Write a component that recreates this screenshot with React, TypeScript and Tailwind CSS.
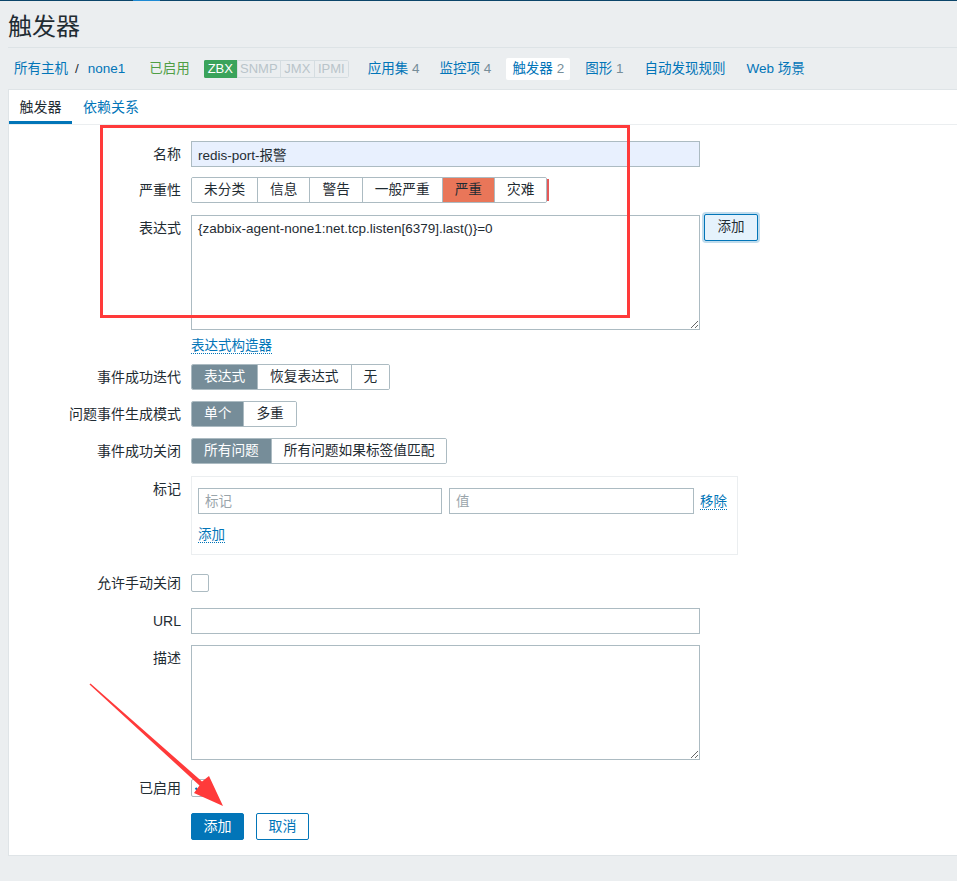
import React from "react";

const txt = "text-[13.5px] text-[#1f2c33]";

function Label({ children }: { children: React.ReactNode }) {
  return (
    <div className="w-[172px] mr-[10px] shrink-0 text-right h-[26px] leading-[26px] text-[14px] text-[#1f2c33]">
      {children}
    </div>
  );
}

function Segmented({
  items,
  active,
  activeClass,
}: {
  items: string[];
  active: number;
  activeClass: string;
}) {
  return (
    <div className="flex h-[26px] border border-[#acbbc2] rounded-[2px] overflow-hidden">
      {items.map((it, i) => (
        <div
          key={it}
          className={`px-[12px] leading-[24px] text-[13.7px] ${i > 0 ? "border-l border-[#acbbc2]" : ""} ${
            i === active ? activeClass : "bg-white text-[#1f2c33]"
          }`}
        >
          {it}
        </div>
      ))}
    </div>
  );
}

function Checkbox({ checked }: { checked?: boolean }) {
  return (
    <div className="w-[18px] h-[18px] border border-[#acbbc2] rounded-[2px] bg-white flex items-center justify-center">
      {checked && (
        <svg width="12" height="10" viewBox="0 0 12 10">
          <path d="M1.5 5 L4.5 8 L10.5 1.5" fill="none" stroke="#0275b8" strokeWidth="2" />
        </svg>
      )}
    </div>
  );
}

function DottedLink({ children }: { children: React.ReactNode }) {
  return (
    <span className="text-[13.5px] leading-[15px] text-[#0275b8] border-b border-dotted border-[#0275b8]">
      {children}
    </span>
  );
}

export default function App() {
  return (
    <div className="relative w-full min-h-[881px] bg-[#ebeef0] overflow-hidden font-['Liberation_Sans','Noto_Sans_CJK_SC',sans-serif]">
      {/* top strip */}
      <div className="h-px bg-[#0b456a] flex">
        <div className="ml-[133px] w-[27px] bg-[#1d8ad4]" />
      </div>

      {/* title */}
      <div className="h-[46px] pt-[6px] pl-[8px] flex items-center">
        <h1 className="text-[24px] leading-[30px] text-[#1f2c33]">触发器</h1>
      </div>
      <div className="ml-[8px] h-px bg-[#dde3e6]" />

      {/* host nav */}
      <div className="h-[41px] flex items-center text-[13.5px] leading-[22px] whitespace-nowrap">
        <a className="ml-[14px] text-[#0275b8]">所有主机</a>
        <span className="ml-[7px] mr-[9px] text-[#1f2c33]">/</span>
        <a className="text-[#0275b8]">none1</a>
        <span className="ml-[24px] text-[#4f9e45]">已启用</span>
        <div className="ml-[14px] flex h-[18px] text-[13px] leading-[16px] rounded-[2px] overflow-hidden">
          <span className="w-[33px] text-center bg-[#3aa35b] border border-[#3aa35b] text-white">ZBX</span>
          <span className="w-[44px] text-center border border-[#d5dde1] text-[#b9c4ca]">SNMP</span>
          <span className="w-[34px] text-center border border-l-0 border-[#d5dde1] text-[#b9c4ca]">JMX</span>
          <span className="w-[34px] text-center border border-l-0 border-[#d5dde1] text-[#b9c4ca] rounded-r-[2px]">IPMI</span>
        </div>
        <a className="ml-[19px] text-[#0275b8]">
          应用集 <span className="text-[#768d99]">4</span>
        </a>
        <a className="ml-[20px] text-[#0275b8]">
          监控项 <span className="text-[#768d99]">4</span>
        </a>
        <span className="ml-[15px] px-[6px] h-[22px] bg-white rounded-[2px] text-[#0275b8]">
          触发器 <span className="text-[#768d99]">2</span>
        </span>
        <a className="ml-[15px] text-[#0275b8]">
          图形 <span className="text-[#768d99]">1</span>
        </a>
        <a className="ml-[21px] text-[#0275b8]">自动发现规则</a>
        <a className="ml-[21px] text-[#0275b8]">Web 场景</a>
      </div>

      {/* panel */}
      <div className="ml-[8px] bg-white border-t border-l border-b border-[#dfe4e7]">
        {/* tabs */}
        <div className="flex h-[35px] border-b border-[#ebeef0] text-[14px] leading-[34px]">
          <div className="w-[63px] text-center text-[#1f2c33] shadow-[inset_0_-3px_0_#0275b8]">触发器</div>
          <div className="ml-[11px] text-[#0275b8]">依赖关系</div>
        </div>

        {/* form */}
        <div className="pt-[16px] pb-[15px]">
          <div className="flex">
            <Label>名称</Label>
            <input
              readOnly
              value="redis-port-报警"
              className={`w-[509px] h-[26px] px-[6px] bg-[#e8f0fe] border border-[#acbbc2] outline-none ${txt}`}
            />
          </div>

          <div className="flex mt-[10px] items-center">
            <Label>严重性</Label>
            <Segmented
              items={["未分类", "信息", "警告", "一般严重", "严重", "灾难"]}
              active={4}
              activeClass="bg-[#e97659] text-[#1f2c33]"
            />
            <div className="w-[2px] h-[22px] bg-[#e45959]" />
          </div>

          <div className="flex mt-[12px] items-start">
            <Label>表达式</Label>
            <textarea
              readOnly
              defaultValue="{zabbix-agent-none1:net.tcp.listen[6379].last()}=0"
              className={`w-[509px] h-[115px] px-[6px] py-[4px] leading-[18px] bg-white border border-[#acbbc2] outline-none ${txt}`}
            />
            <button className="ml-[4px] mt-[-1px] w-[54px] h-[27px] bg-[#e5f2fc] border border-[#0275b8] rounded-[2px] shadow-[0_0_0_2px_rgba(2,117,184,0.25)] text-[13.5px] text-[#1f2c33]">
              添加
            </button>
          </div>

          <div className="flex mt-[8px] h-[16px]">
            <div className="w-[182px] shrink-0" />
            <DottedLink>表达式构造器</DottedLink>
          </div>

          <div className="flex mt-[10px]">
            <Label>事件成功迭代</Label>
            <Segmented
              items={["表达式", "恢复表达式", "无"]}
              active={0}
              activeClass="bg-[#768d99] text-white"
            />
          </div>

          <div className="flex mt-[11px]">
            <Label>问题事件生成模式</Label>
            <Segmented items={["单个", "多重"]} active={0} activeClass="bg-[#768d99] text-white" />
          </div>

          <div className="flex mt-[11px]">
            <Label>事件成功关闭</Label>
            <Segmented
              items={["所有问题", "所有问题如果标签值匹配"]}
              active={0}
              activeClass="bg-[#768d99] text-white"
            />
          </div>

          <div className="flex mt-[12px]">
            <Label>标记</Label>
            <div className="w-[547px] h-[79px] border border-[#ebeef0] pt-[11px] pl-[6px]">
              <div className="flex items-center">
                <input
                  readOnly
                  placeholder="标记"
                  className={`w-[244px] h-[26px] px-[6px] border border-[#acbbc2] outline-none placeholder:text-[#9aa5ab] ${txt}`}
                />
                <input
                  readOnly
                  placeholder="值"
                  className={`ml-[7px] w-[245px] h-[26px] px-[6px] border border-[#acbbc2] outline-none placeholder:text-[#9aa5ab] ${txt}`}
                />
                <span className="ml-[6px]">
                  <DottedLink>移除</DottedLink>
                </span>
              </div>
              <div className="mt-[8px]">
                <DottedLink>添加</DottedLink>
              </div>
            </div>
          </div>

          <div className="flex mt-[15px] items-center">
            <Label>允许手动关闭</Label>
            <Checkbox />
          </div>

          <div className="flex mt-[12px]">
            <Label>URL</Label>
            <input
              readOnly
              className={`w-[509px] h-[26px] px-[6px] bg-white border border-[#acbbc2] outline-none ${txt}`}
            />
          </div>

          <div className="flex mt-[11px] items-start">
            <Label>描述</Label>
            <textarea
              readOnly
              className={`w-[509px] h-[115px] px-[6px] py-[4px] bg-white border border-[#acbbc2] outline-none ${txt}`}
            />
          </div>

          <div className="flex mt-[15px] items-center">
            <Label>已启用</Label>
            <Checkbox checked />
          </div>

          <div className="flex mt-[12px]">
            <div className="w-[182px] shrink-0" />
            <button className="w-[53px] h-[27px] bg-[#0275b8] border border-[#0275b8] rounded-[2px] text-[14px] text-white">
              添加
            </button>
            <button className="ml-[12px] w-[53px] h-[27px] bg-white border border-[#0275b8] rounded-[2px] text-[14px] text-[#0275b8]">
              取消
            </button>
          </div>
        </div>
      </div>

      {/* screenshot annotations */}
      <svg className="absolute left-0 top-0 pointer-events-none" width="957" height="881">
        <rect x="101.5" y="126.5" width="527" height="190" fill="none" stroke="#ff3a3a" strokeWidth="3" />
        <polygon
          points="89.5,684.5 199.5,785.5 194,793 223,806 209,776 202,781.5 90.5,683.5"
          fill="#ff3a3a"
        />
      </svg>
    </div>
  );
}
